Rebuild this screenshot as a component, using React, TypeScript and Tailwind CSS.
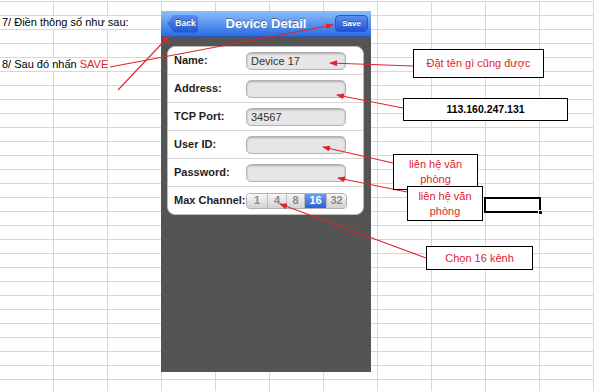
import React from "react";

const ROWS = 28;
const COLS = 11;
const LINE = "border-[#d0d7e5]";

function SheetRow({ idx }: { idx: number }) {
  if (idx === 1) {
    return (
      <div className={`flex h-[14px] border-t ${LINE}`}>
        <div className={`w-[162px] shrink-0 border-r ${LINE} h-full pl-[2px] text-[11px] leading-[13px] text-black whitespace-nowrap`}>
          7/ Điền thông số như sau:
        </div>
        {Array.from({ length: COLS - 3 }).map((_, c) => (
          <div key={c} className={`w-[54px] shrink-0 border-r ${LINE} h-full`} />
        ))}
      </div>
    );
  }
  if (idx === 4) {
    return (
      <div className={`flex h-[14px] border-t ${LINE}`}>
        <div className={`w-[108px] shrink-0 border-r ${LINE} h-full pl-[2px] text-[11px] leading-[13px] text-black whitespace-nowrap`}>
          8/ Sau đó nhấn <span className="text-[#e0242c]">SAVE</span>
        </div>
        {Array.from({ length: COLS - 2 }).map((_, c) => (
          <div key={c} className={`w-[54px] shrink-0 border-r ${LINE} h-full`} />
        ))}
      </div>
    );
  }
  return (
    <div className={`flex h-[14px] border-t ${LINE}`}>
      {Array.from({ length: COLS }).map((_, c) => (
        <div key={c} className={`w-[54px] shrink-0 border-r ${LINE} h-full`} />
      ))}
    </div>
  );
}

function FieldRow({ label, value, last }: { label: string; value?: string; last?: boolean }) {
  return (
    <div className={`flex items-center h-[28px] ${last ? "" : "border-b border-[#d6d6d6]"}`}>
      <div className="w-[78px] pl-[6px] text-[11px] font-bold text-[#1e1e1e] whitespace-nowrap">{label}</div>
      <div className="w-[100px] h-[18px] rounded-[5px] border border-[#b3b3b3] bg-[#e6e6e6] shadow-[inset_0_1px_2px_rgba(0,0,0,0.25)] pl-[4px] text-[11px] leading-[16px] text-[#333]">
        {value}
      </div>
    </div>
  );
}

const SEGS = [
  { t: "1", w: "w-[20px]" },
  { t: "4", w: "w-[19px]" },
  { t: "8", w: "w-[18px]" },
  { t: "16", w: "w-[22px]", sel: true },
  { t: "32", w: "w-[20px]" },
];

function Phone() {
  return (
    <div className="absolute left-[161px] top-[11px] w-[210px] h-[361px] flex flex-col bg-[#545454]">
      <div className="relative h-[26px] shrink-0 bg-gradient-to-b from-[#8fbdf9] via-[#5a95ee] to-[#2d6ce0] border-b border-[#2a58b5] flex items-center justify-between px-[6px]">
        <div className="h-[18px] w-[31px] pl-[6px] flex items-center justify-center rounded-r-[4px] bg-gradient-to-b from-[#5a8ff0] to-[#1f52d2] [clip-path:polygon(7px_0,100%_0,100%_100%,7px_100%,0_50%)] text-white text-[8.5px] font-bold [text-shadow:0_-1px_0_rgba(0,0,0,0.4)]">
          Back
        </div>
        <div className="absolute inset-x-0 top-0 h-full flex items-center justify-center text-white text-[13px] font-bold [text-shadow:0_-1px_0_rgba(0,0,0,0.35)] pointer-events-none">
          Device Detail
        </div>
        <div className="h-[17px] w-[33px] mr-[-3px] flex items-center justify-center rounded-[4px] bg-gradient-to-b from-[#5a8ff0] to-[#1f52d2] border border-[#2a56c0] text-white text-[8px] font-bold [text-shadow:0_-1px_0_rgba(0,0,0,0.4)]">
          Save
        </div>
      </div>
      <div className="flex-1 pl-[6px] pr-[7px] pt-[9px]">
        <div className="w-[197px] rounded-[8px] border border-[#bdbdbd] bg-white">
          <FieldRow label="Name:" value="Device 17" />
          <FieldRow label="Address:" />
          <FieldRow label="TCP Port:" value="34567" />
          <FieldRow label="User ID:" />
          <FieldRow label="Password:" />
          <div className="flex items-center h-[27px]">
            <div className="w-[78px] pl-[6px] text-[11px] font-bold text-[#1e1e1e] whitespace-nowrap">Max Channel:</div>
            <div className="flex h-[16px] rounded-[4px] border border-[#b0b0b0] overflow-hidden">
              {SEGS.map((s, i) => (
                <div
                  key={s.t}
                  className={`${s.w} h-full flex items-center justify-center text-[11px] font-bold ${i > 0 ? "border-l border-[#bcbcbc]" : ""} ${
                    s.sel
                      ? "bg-gradient-to-b from-[#6a9cf3] to-[#2a62d8] text-white"
                      : "bg-gradient-to-b from-[#f7f7f7] to-[#d2d2d2] text-[#8a8a8a]"
                  }`}
                >
                  {s.t}
                </div>
              ))}
            </div>
          </div>
        </div>
      </div>
    </div>
  );
}

function Callouts() {
  const red = "text-[#e0242c]";
  return (
    <>
      <div className={`absolute left-[413px] top-[49px] w-[131px] h-[29px] border border-black bg-white flex items-center justify-center text-[11px] ${red}`}>
        Đặt tên gì cũng được
      </div>
      <div className="absolute left-[403px] top-[98px] w-[165px] h-[23px] border border-black bg-white flex items-center justify-center text-[10.5px] font-bold text-black">
        113.160.247.131
      </div>
      <div className={`absolute left-[393px] top-[154px] w-[85px] h-[36px] border border-black bg-white flex flex-col items-center justify-center text-[11px] leading-[15px] ${red}`}>
        <span>liên hệ văn</span>
        <span>phòng</span>
      </div>
      <div className={`absolute left-[407px] top-[186px] w-[76px] h-[35px] border border-black bg-white flex flex-col items-center justify-center text-[11px] leading-[15px] ${red}`}>
        <span>liên hệ văn</span>
        <span>phòng</span>
      </div>
      <div className="absolute left-[484px] top-[197px] w-[57px] h-[16px] border-2 border-black" />
      <div className="absolute left-[538px] top-[210px] w-[5px] h-[5px] bg-black border border-white" />
      <div className={`absolute left-[426px] top-[246px] w-[107px] h-[24px] border border-black bg-white flex items-center justify-center text-[11px] ${red}`}>
        Chọn 16 kênh
      </div>
    </>
  );
}

function Arrows() {
  const lines: [number, number, number, number][] = [
    [110, 67, 333, 25],
    [118, 90, 169, 36],
    [413, 66, 330, 63],
    [403, 108, 337, 95],
    [393, 163, 323, 147],
    [407, 192, 338, 178],
    [426, 258, 280, 204],
  ];
  return (
    <svg className="absolute left-0 top-0 pointer-events-none" width="594" height="391" viewBox="0 0 594 391">
      <defs>
        <marker id="ah" markerWidth="8" markerHeight="6" refX="7" refY="3" orient="auto" markerUnits="userSpaceOnUse">
          <path d="M0,0 L8,3 L0,6 Z" fill="#e0242c" />
        </marker>
      </defs>
      {lines.map(([x1, y1, x2, y2], i) => (
        <line key={i} x1={x1} y1={y1} x2={x2} y2={y2} stroke="#e0242c" strokeWidth="1.1" markerEnd="url(#ah)" />
      ))}
    </svg>
  );
}

export default function App() {
  return (
    <div className="relative w-[594px] h-[391px] overflow-hidden bg-white font-['Liberation_Sans',Arial,sans-serif]">
      <div className="pt-px">
        {Array.from({ length: ROWS }).map((_, r) => (
          <SheetRow key={r} idx={r} />
        ))}
      </div>
      <Phone />
      <Arrows />
      <Callouts />
    </div>
  );
}
